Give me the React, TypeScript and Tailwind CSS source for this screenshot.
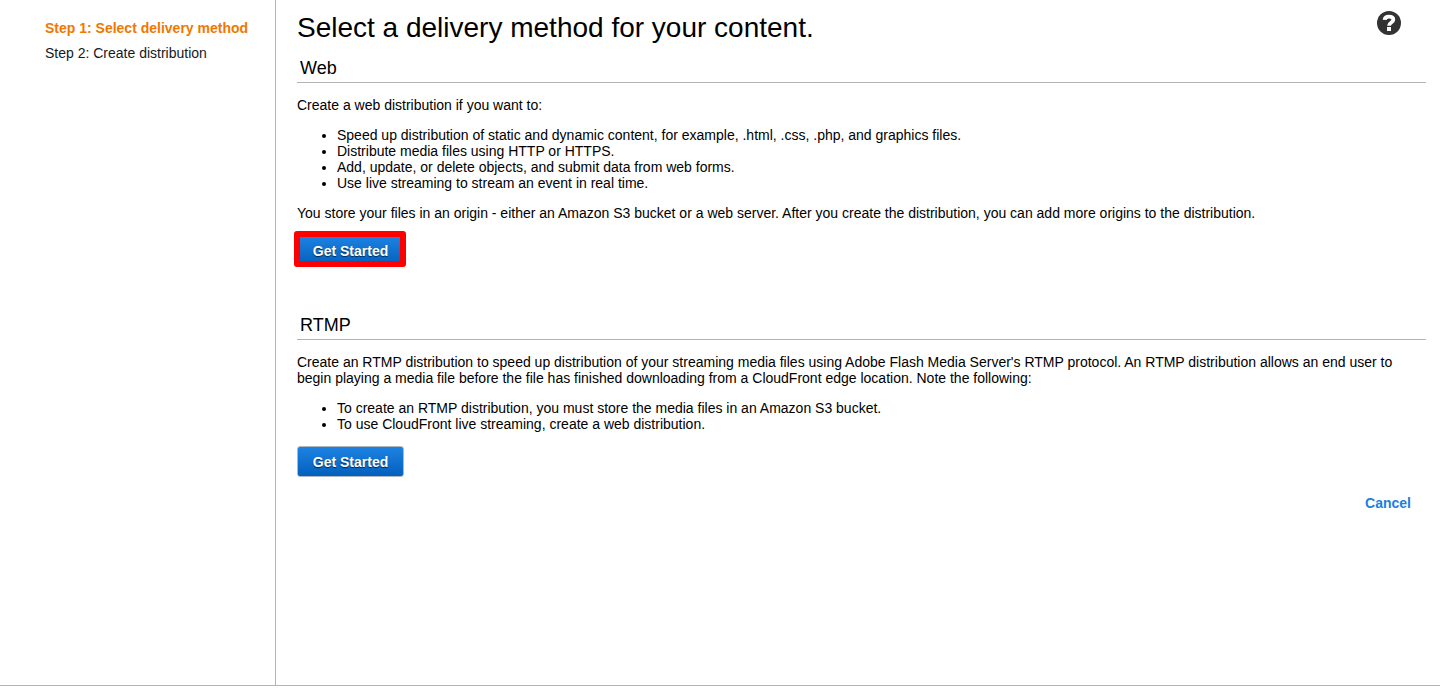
import type { ReactNode } from 'react'

// ── Icons ──────────────────────────────────────────────────────────────────────

function HelpIcon() {
  return (
    <svg viewBox="0 0 24 24" className="size-6" aria-hidden="true">
      <circle cx="12" cy="12" r="12" fill="#333" />
      <path d="M7.6 8.9C7.8 6.7 9.4 5.6 11.9 5.6c2.6 0 4.4 1.2 4.4 3.2 0 2.8-4.3 2.6-4.3 6" fill="none" stroke="#fff" strokeWidth="3.8" />
      <rect x="10" y="16" width="4" height="4" fill="#fff" />
    </svg>
  )
}

// ── Wizard steps ───────────────────────────────────────────────────────────────

const steps = [
  { label: 'Step 1: Select delivery method', current: true },
  { label: 'Step 2: Create distribution', current: false },
]

function Steps() {
  return (
    <nav className="w-[276px] shrink-0 border-r border-[#b3b3b3] pt-5 pl-[45px]" aria-label="Wizard steps">
      <ol className="space-y-[9px]">
        {steps.map((step) => (
          <li
            key={step.label}
            aria-current={step.current ? 'step' : undefined}
            className={step.current ? 'font-bold text-[#f07800]' : 'text-[#16191f]'}
          >
            {step.label}
          </li>
        ))}
      </ol>
    </nav>
  )
}

// ── Delivery methods ───────────────────────────────────────────────────────────

function GetStartedButton({ highlighted = false }: { highlighted?: boolean }) {
  return (
    <div className="relative mt-3.5 w-fit">
      <button
        type="button"
        className="block h-[31px] w-[107px] rounded-[3px] border border-[#b0b7c0] bg-linear-to-b from-[#1c83e2] to-[#0460bd] text-center font-bold text-white text-shadow-[0_1px_1px_#00264d]"
      >
        Get Started
      </button>
      {highlighted && (
        <span className="pointer-events-none absolute -top-1 -right-0.5 -bottom-px -left-[3px] rounded-[3px] border-6 border-[#fe0000]" />
      )}
    </div>
  )
}

type MethodProps = {
  title: string
  intro: string
  items: string[]
  children?: ReactNode
  highlighted?: boolean
}

function Method({ title, intro, items, children, highlighted }: MethodProps) {
  return (
    <section>
      <h2 className="border-b border-[#b3b3b3] px-[3px] pb-1 text-[18px] leading-5">{title}</h2>
      <p className="mt-3.5">{intro}</p>
      <ul className="mt-3.5 list-disc pl-10">
        {items.map((item) => (
          <li key={item}>{item}</li>
        ))}
      </ul>
      {children}
      <GetStartedButton highlighted={highlighted} />
    </section>
  )
}

// ── Page ───────────────────────────────────────────────────────────────────────

export default function App() {
  return (
    <div className="flex min-h-[calc(100vh-7px)] border-b border-[#b3b3b3] bg-white font-['Liberation_Sans',Arial,sans-serif] text-[14px] leading-4 text-black">
      <Steps />
      <main className="min-w-0 flex-1 pt-[11px] pr-3.5 pl-[21px]">
        <header className="flex items-start justify-between pr-[25px]">
          <h1 className="text-[28px] leading-[34px]">Select a delivery method for your content.</h1>
          <button type="button" aria-label="Help">
            <HelpIcon />
          </button>
        </header>

        <div className="mt-[13px] space-y-[49px]">
          <Method
            title="Web"
            intro="Create a web distribution if you want to:"
            items={[
              'Speed up distribution of static and dynamic content, for example, .html, .css, .php, and graphics files.',
              'Distribute media files using HTTP or HTTPS.',
              'Add, update, or delete objects, and submit data from web forms.',
              'Use live streaming to stream an event in real time.',
            ]}
            highlighted
          >
            <p className="mt-3.5">
              You store your files in an origin - either an Amazon S3 bucket or a web server. After you create the
              distribution, you can add more origins to the distribution.
            </p>
          </Method>
          <Method
            title="RTMP"
            intro="Create an RTMP distribution to speed up distribution of your streaming media files using Adobe Flash Media Server's RTMP protocol. An RTMP distribution allows an end user to begin playing a media file before the file has finished downloading from a CloudFront edge location. Note the following:"
            items={[
              'To create an RTMP distribution, you must store the media files in an Amazon S3 bucket.',
              'To use CloudFront live streaming, create a web distribution.',
            ]}
          />
        </div>

        <div className="mt-[18px] flex justify-end pr-[15px]">
          <a href="#cancel" className="font-bold text-[#1a80df]">
            Cancel
          </a>
        </div>
      </main>
    </div>
  )
}
